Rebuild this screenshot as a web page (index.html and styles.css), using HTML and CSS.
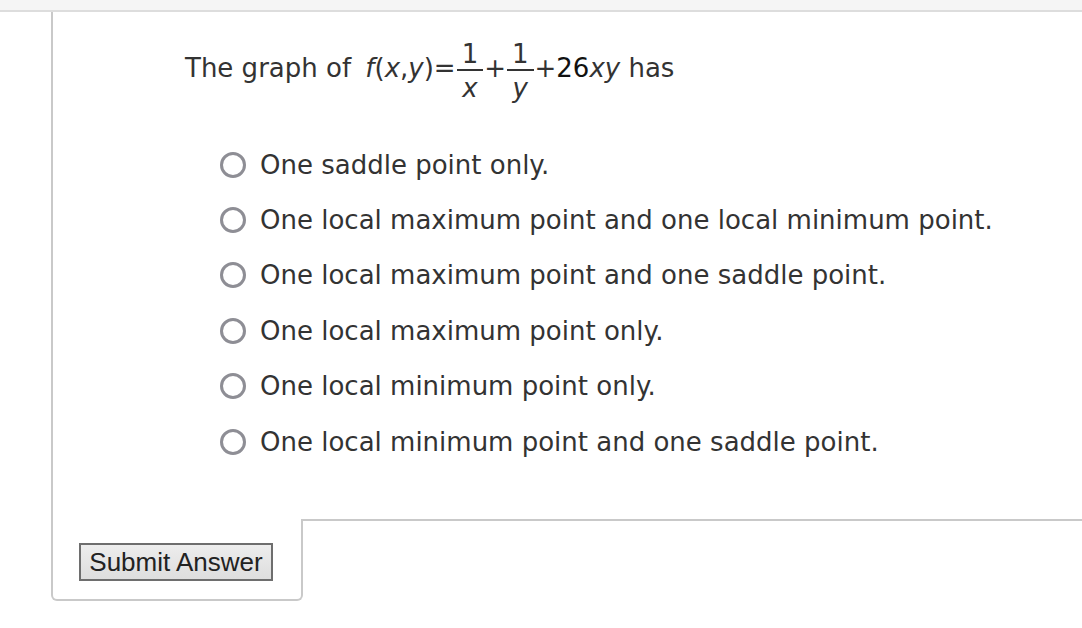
FILE: index.html
```html
<!DOCTYPE html>
<html>
<head>
<meta charset="utf-8">
<link rel="stylesheet" href="styles.css">
</head>
<body>
<div class="topbar"></div>
<div class="panel">
  <div class="body">
    <p class="prompt">The graph of <span class="math"><i>f</i>(<i>x</i>,<i>y</i>)=<span class="frac"><span class="num">1</span><span class="den"><i>x</i></span></span>+<span class="frac"><span class="num">1</span><span class="den"><i>y</i></span></span>+<span class="dark">26</span><i>xy</i></span> has</p>
    <ul class="options">
      <li class="option"><span class="radio"></span><span class="label">One saddle point only.</span></li>
      <li class="option"><span class="radio"></span><span class="label">One local maximum point and one local minimum point.</span></li>
      <li class="option"><span class="radio"></span><span class="label">One local maximum point and one saddle point.</span></li>
      <li class="option"><span class="radio"></span><span class="label">One local maximum point only.</span></li>
      <li class="option"><span class="radio"></span><span class="label">One local minimum point only.</span></li>
      <li class="option"><span class="radio"></span><span class="label">One local minimum point and one saddle point.</span></li>
    </ul>
  </div>
  <div class="footer">
    <div class="submit-cell"><button class="submit">Submit Answer</button></div>
    <div class="rest"></div>
  </div>
</div>
</body>
</html>
```

FILE: styles.css
```css
html, body {
  margin: 0;
  padding: 0;
  background: #ffffff;
}
body {
  font-family: "DejaVu Sans", Verdana, sans-serif;
  color: #333333;
  font-size: 26px;
}
.topbar {
  height: 10px;
  background: #f5f5f5;
  border-bottom: 2px solid #dddddd;
}
.panel {
  margin-left: 51px;
}
.body {
  border-left: 2px solid #c9c9c9;
  height: 507px;
  padding-left: 132px;
  box-sizing: border-box;
  overflow: hidden;
}
.prompt {
  margin: 0;
  padding-top: 27px;
  padding-bottom: 3px;
  line-height: 50px;
  white-space: nowrap;
}
.math {
  margin-left: 6px;
}
.math i {
  font-style: italic;
}
.dark {
  color: #111111;
}
.frac {
  display: inline-block;
  vertical-align: -20px;
  text-align: center;
  margin: 0 1px;
}
.num {
  display: block;
  line-height: 30px;
  padding: 0 5px;
  border-bottom: 2px solid #333333;
}
.den {
  display: block;
  line-height: 30px;
  padding-top: 2px;
}
.options {
  list-style: none;
  margin: 0;
  padding: 0;
  margin-top: 31px;
  margin-left: 35px;
}
.option {
  display: flex;
  align-items: center;
  height: 55.4px;
}
.radio {
  width: 26px;
  height: 26px;
  box-sizing: border-box;
  border: 3px solid #8e8e95;
  border-radius: 50%;
  margin-right: 14px;
  flex: none;
}
.label {
  line-height: 30px;
  white-space: nowrap;
}
.footer {
  display: flex;
}
.submit-cell {
  width: 252px;
  box-sizing: border-box;
  border-left: 2px solid #c9c9c9;
  border-right: 2px solid #c9c9c9;
  border-bottom: 2px solid #c9c9c9;
  border-radius: 0 0 6px 6px;
  padding: 24px 0 18px 26px;
}
.submit {
  display: block;
  width: 194px;
  height: 38px;
  margin: 0;
  padding: 0;
  font-family: "Liberation Sans", Arial, sans-serif;
  font-size: 26px;
  color: #222222;
  border: 2px solid #6e6e6e;
  background: linear-gradient(#ededed, #dedede);
  border-radius: 0;
}
.rest {
  flex: 1;
  border-top: 2px solid #c9c9c9;
}
```
